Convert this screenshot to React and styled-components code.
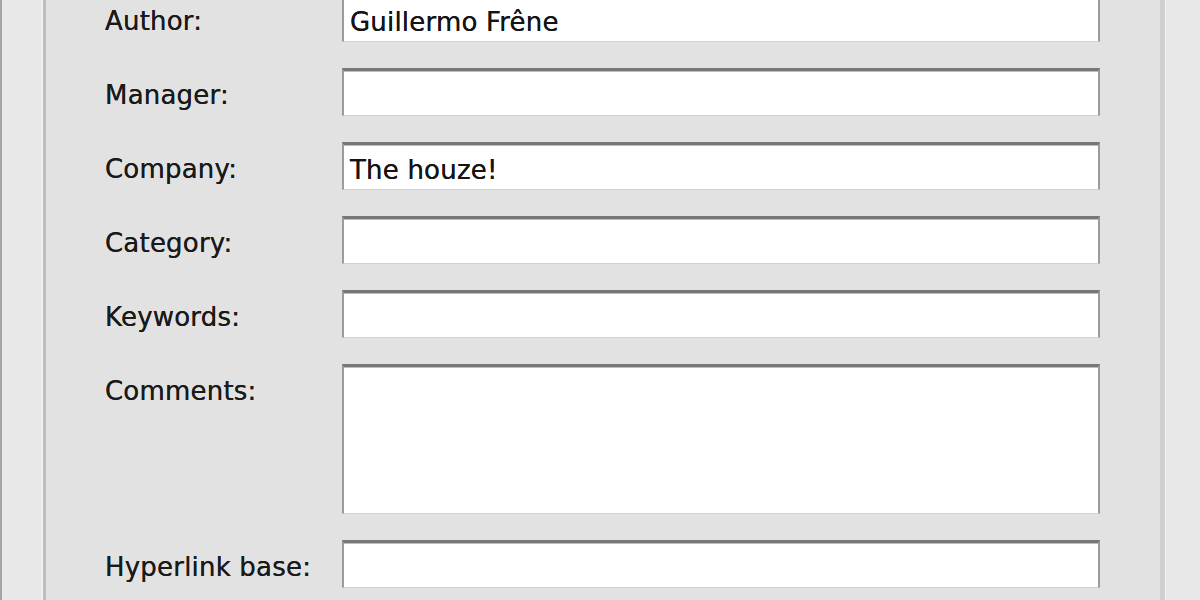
import React from 'react';
import styled, { createGlobalStyle } from 'styled-components';

const GlobalStyle = createGlobalStyle`
  html, body {
    margin: 0;
    padding: 0;
    background: #e8e8e8;
  }
`;

const Window = styled.div`
  display: flex;
  width: 1200px;
  height: 600px;
  overflow: hidden;
  background: #e8e8e8;
  font-family: "DejaVu Sans", Verdana, sans-serif;
`;

const Gutter = styled.div`
  flex: 0 0 ${(p) => p.$width}px;
  box-sizing: border-box;
  background: #e8e8e8;
  border-left: ${(p) => (p.$side === 'left' ? '2px solid #a4a4a4' : '0')};
  box-shadow: ${(p) =>
    p.$side === 'left'
      ? 'inset -2px 0 0 #f1f1f1'
      : 'inset 5px 0 0 #d0d0d0, inset 6px 0 0 #f2f2f2'};
`;

const Panel = styled.div`
  flex: 1;
  background: #e2e2e2;
  border-left: 3px solid #bebebe;
  padding: 0 60px 0 59px;
`;

const Form = styled.div`
  display: grid;
  grid-template-columns: 237px 1fr;
  row-gap: 26px;
  margin-top: -6px;
`;

const Label = styled.label`
  height: 48px;
  box-sizing: border-box;
  padding-top: 6px;
  display: flex;
  align-items: center;
  font-size: 26px;
  letter-spacing: 0.2px;
  color: #1a1a1a;
  text-shadow: 0 0 0.6px #1a1a1a;
  white-space: nowrap;
`;

const Field = styled.div`
  box-sizing: border-box;
  height: ${(p) => p.$height || 48}px;
  background: #ffffff;
  border-top: 3px solid #777777;
  border-left: 2px solid #9c9c9c;
  border-right: 2px solid #9c9c9c;
  border-bottom: 1px solid #d2d2d2;
  box-shadow: inset 0 1px 0 #bdbdbd;
  padding: 5px 6px 0;
  display: flex;
  align-items: ${(p) => (p.$multi ? 'flex-start' : 'center')};
  font-size: 26px;
  letter-spacing: 0.2px;
  color: #141414;
  text-shadow: 0 0 0.6px #141414;
  white-space: nowrap;
  overflow: hidden;
`;

const rows = [
  { label: 'Author:', value: 'Guillermo Frêne' },
  { label: 'Manager:', value: '' },
  { label: 'Company:', value: 'The houze!' },
  { label: 'Category:', value: '' },
  { label: 'Keywords:', value: '' },
  { label: 'Comments:', value: '', height: 150, multi: true },
  { label: 'Hyperlink base:', value: '' },
];

const App = () => (
  <>
    <GlobalStyle />
    <Window>
      <Gutter $side="left" $width={43} />
      <Panel>
        <Form>
          {rows.map((r) => (
            <React.Fragment key={r.label}>
              <Label>{r.label}</Label>
              <Field $height={r.height} $multi={r.multi}>
                {r.value}
              </Field>
            </React.Fragment>
          ))}
        </Form>
      </Panel>
      <Gutter $side="right" $width={40} />
    </Window>
  </>
);

export default App;
